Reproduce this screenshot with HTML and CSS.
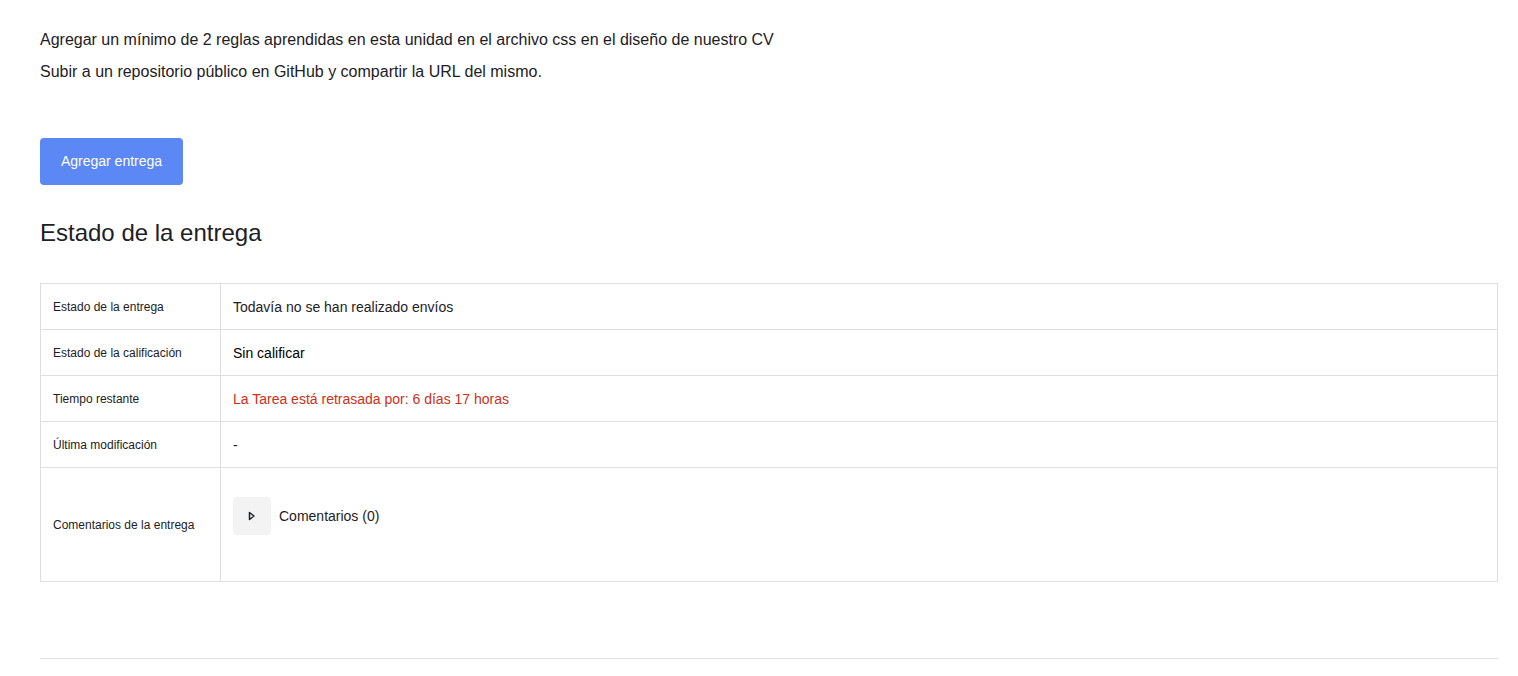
FILE: index.html
```html
<!DOCTYPE html>
<html lang="es">
<head>
<meta charset="utf-8">
<link rel="stylesheet" href="styles.css">
</head>
<body>
<main class="page">
  <div class="intro">
    <p>Agregar un mínimo de 2 reglas aprendidas en esta unidad en el archivo css en el diseño de nuestro CV</p>
    <p>Subir a un repositorio público en GitHub y compartir la URL del mismo.</p>
  </div>
  <button class="btn-primary" type="button">Agregar entrega</button>
  <h2 class="title">Estado de la entrega</h2>
  <table class="status">
    <tr><th>Estado de la entrega</th><td>Todavía no se han realizado envíos</td></tr>
    <tr><th>Estado de la calificación</th><td class="dark">Sin calificar</td></tr>
    <tr><th>Tiempo restante</th><td class="late">La Tarea está retrasada por: 6 días 17 horas</td></tr>
    <tr><th>Última modificación</th><td>-</td></tr>
    <tr class="tall"><th>Comentarios de la entrega</th><td class="top">
      <div class="comments">
        <span class="toggle"><svg width="8" height="10" viewBox="0 0 8 10"><path d="M1.5 1.5 L6 5 L1.5 8.5 Z" fill="none" stroke="#1d2125" stroke-width="1.5" stroke-linejoin="round"/></svg></span>
        <span class="clabel">Comentarios (0)</span>
      </div>
    </td></tr>
  </table>
  <hr class="rule">
</main>
</body>
</html>
```
FILE: styles.css
```css
* { box-sizing: border-box; }
body {
  margin: 0;
  font-family: "Liberation Sans", Arial, sans-serif;
  color: #1d2125;
  background: #fff;
}
.page {
  padding: 29px 20px 0 40px;
}
.intro p {
  margin: 0 0 10px;
  font-size: 16px;
  line-height: 22px;
}
.btn-primary {
  margin-top: 55px;
  display: block;
  width: 143px;
  height: 47px;
  border: none;
  border-radius: 4px;
  background: #5c88f5;
  color: #fff;
  font-family: inherit;
  font-size: 14px;
  line-height: 16px;
  padding: 0 0 2px;
}
.title {
  margin: 33px 0 0;
  font-size: 24px;
  font-weight: 400;
  line-height: 30px;
  color: #1d2125;
}
.status {
  margin-top: 35px;
  width: 100%;
  border-collapse: collapse;
}
.status th, .status td {
  border: 1px solid #dedede;
  height: 46px;
  padding: 0 12px;
  vertical-align: middle;
  text-align: left;
}
.status th {
  width: 180px;
  font-size: 12px;
  font-weight: 400;
}
.status td {
  font-size: 14px;
}
.status td.dark { color: #000; }
.status td.late { color: #ca3120; }
.status tr.tall th, .status tr.tall td { height: 114px; }
.status td.top { vertical-align: top; padding-top: 29px; }
.comments {
  display: flex;
  align-items: center;
  gap: 8px;
}
.toggle {
  width: 38px;
  height: 38px;
  border-radius: 4px;
  background: #f3f3f3;
  display: flex;
  align-items: center;
  justify-content: center;
}
.clabel { font-size: 14px; }
.rule {
  margin: 76px 0 0;
  border: 0;
  border-top: 1px solid #dedede;
}
```
